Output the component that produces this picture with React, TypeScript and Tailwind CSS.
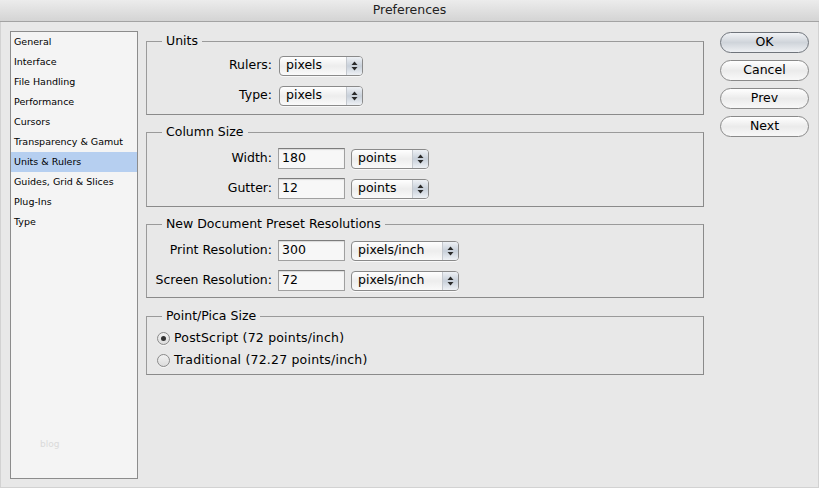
import React from 'react';

// Boîte de dialogue Préférences (style Aqua) — unités et règles
const FONT = "font-['DejaVu_Sans',sans-serif]";

const sections = [
  'General',
  'Interface',
  'File Handling',
  'Performance',
  'Cursors',
  'Transparency & Gamut',
  'Units & Rulers',
  'Guides, Grid & Slices',
  'Plug-Ins',
  'Type',
];

function Arrows() {
  return (
    <svg width="7" height="10" viewBox="0 0 7 10" className="block">
      <path d="M3.5 0.5 L6.5 4 L0.5 4 Z" fill="#2a2a2a" />
      <path d="M0.5 6 L6.5 6 L3.5 9.5 Z" fill="#2a2a2a" />
    </svg>
  );
}

function Popup({ value, width }: { value: string; width: string }) {
  return (
    <div
      className={`${width} h-[20px] flex items-stretch rounded-[4px] border border-[#8a8a8a] bg-linear-to-b from-white via-[#ededed] to-[#fafafa] shadow-[0_1px_0_rgba(255,255,255,0.7)] overflow-hidden`}
    >
      <span className="flex-1 flex items-center pl-[6px] text-[12.5px] leading-none">{value}</span>
      <span className="w-[16px] flex items-center justify-center border-l border-[#c4c8ce] bg-linear-to-b from-[#eef1f5] via-[#c8d0da] to-[#eef1f5]">
        <Arrows />
      </span>
    </div>
  );
}

function Field({ value }: { value: string }) {
  return (
    <div className="w-[67px] h-[21px] flex items-center pl-[3px] border border-[#a0a0a0] border-t-[#7c7c7c] bg-[#f7f7f7] text-[12.5px] leading-none shadow-[inset_0_1px_1px_rgba(0,0,0,0.12)]">
      {value}
    </div>
  );
}

function Group({ title, height, children }: { title: string; height: string; children: React.ReactNode }) {
  return (
    <fieldset className={`${height} border border-[#9a9a9a] border-r-[#8a8a8a] border-b-[#8a8a8a]`}>
      <legend className="ml-[15px] px-[4px] text-[12.5px] leading-[16px]">{title}</legend>
      {children}
    </fieldset>
  );
}

function Row({ label, children }: { label: string; children: React.ReactNode }) {
  return (
    <div className="flex items-center h-[21px]">
      <span className="w-[126px] text-right text-[12.5px] leading-none pr-px">{label}</span>
      <div className="ml-[5px] flex items-center gap-[6px]">{children}</div>
    </div>
  );
}

function Radio({ checked, label }: { checked?: boolean; label: string }) {
  return (
    <div className="flex items-center h-[18px] gap-[4px]">
      <span className="w-[13px] h-[13px] rounded-full border border-[#8a8a8a] bg-linear-to-b from-[#f2f2f2] to-[#dcdcdc] flex items-center justify-center shadow-[0_1px_0_rgba(255,255,255,0.6)]">
        {checked && <span className="w-[5px] h-[5px] rounded-full bg-[#333]" />}
      </span>
      <span className="text-[12.5px] leading-none tracking-[0.2px]">{label}</span>
    </div>
  );
}

function Button({ label, primary }: { label: string; primary?: boolean }) {
  return (
    <button
      className={`w-[89px] h-[21px] rounded-full border text-[12.5px] leading-none ${
        primary
          ? 'border-[#6f747b] bg-linear-to-b from-[#f1f3f6] via-[#cfd4da] to-[#eef0f3]'
          : 'border-[#8a8a8a] bg-linear-to-b from-white via-[#ebebeb] to-[#f8f8f8]'
      }`}
    >
      {label}
    </button>
  );
}

export default function App() {
  return (
    <div className={`w-[819px] h-[488px] flex flex-col bg-[#e8e8e8] text-black overflow-hidden ${FONT}`}>
      {/* Barre de titre */}
      <div className="h-[22px] shrink-0 flex items-center justify-center bg-linear-to-b from-[#ececec] to-[#d4d4d4] border-b border-[#a3a3a3] text-[12.5px] text-[#222]">
        Preferences
      </div>

      <div className="flex-1 flex border-r border-b border-l border-[#d2d2d2]">
        {/* Liste des sections */}
        <div className="relative ml-[9px] mt-[9px] w-[128px] h-[448px] bg-[#f4f4f4] border border-[#8c8c8c]">
          {sections.map((s) => (
            <div
              key={s}
              className={`h-[20px] flex items-center pl-[3px] text-[9.5px] ${
                s === 'Units & Rulers' ? 'bg-[#b6cff0]' : ''
              }`}
            >
              {s}
            </div>
          ))}
          <span className="absolute left-[29px] top-[406px] text-[9px] text-[#dadada]">blog</span>
        </div>

        {/* Réglages */}
        <div className="ml-[8px] w-[558px] pt-[11px] flex flex-col gap-[9px]">
          <Group title="Units" height="h-[82px]">
            <div className="pt-[6px] flex flex-col gap-[9px]">
              <Row label="Rulers:">
                <Popup value="pixels" width="w-[84px] ml-px" />
              </Row>
              <Row label="Type:">
                <Popup value="pixels" width="w-[84px] ml-px" />
              </Row>
            </div>
          </Group>

          <Group title="Column Size" height="h-[83px]">
            <div className="pt-[8px] flex flex-col gap-[9px]">
              <Row label="Width:">
                <Field value="180" />
                <Popup value="points" width="w-[78px]" />
              </Row>
              <Row label="Gutter:">
                <Field value="12" />
                <Popup value="points" width="w-[78px]" />
              </Row>
            </div>
          </Group>

          <Group title="New Document Preset Resolutions" height="h-[82px]">
            <div className="pt-[8px] flex flex-col gap-[9px]">
              <Row label="Print Resolution:">
                <Field value="300" />
                <Popup value="pixels/inch" width="w-[108px]" />
              </Row>
              <Row label="Screen Resolution:">
                <Field value="72" />
                <Popup value="pixels/inch" width="w-[108px]" />
              </Row>
            </div>
          </Group>

          <Group title="Point/Pica Size" height="h-[67px] mt-px">
            <div className="pt-[5px] pl-[10px] flex flex-col gap-[4px]">
              <Radio checked label="PostScript (72 points/inch)" />
              <Radio label="Traditional (72.27 points/inch)" />
            </div>
          </Group>
        </div>

        {/* Boutons */}
        <div className="ml-[16px] mt-[10px] flex flex-col gap-[7px]">
          <Button label="OK" primary />
          <Button label="Cancel" />
          <Button label="Prev" />
          <Button label="Next" />
        </div>
      </div>
    </div>
  );
}
